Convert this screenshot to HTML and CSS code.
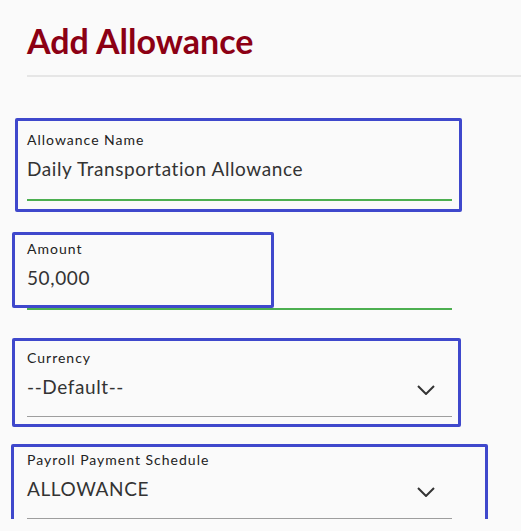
FILE: index.html
```html
<!DOCTYPE html>
<html lang="en">
<head>
<meta charset="utf-8">
<title>Add Allowance</title>
<link rel="stylesheet" href="styles.css">
</head>
<body>
<div class="page">
  <header class="page-header">
    <h1 class="page-title">Add Allowance</h1>
  </header>
  <form class="form">
    <div class="field field-name">
      <span class="highlight hl-name"></span>
      <label class="field-label">Allowance Name</label>
      <div class="field-control is-valid">
        <span class="field-value">Daily Transportation Allowance</span>
      </div>
    </div>
    <div class="field field-amount">
      <span class="highlight hl-amount"></span>
      <label class="field-label">Amount</label>
      <div class="field-control is-valid">
        <span class="field-value">50,000</span>
      </div>
    </div>
    <div class="field field-currency">
      <span class="highlight hl-currency"></span>
      <label class="field-label">Currency</label>
      <div class="field-control is-select">
        <span class="field-value">--Default--</span>
        <svg class="chevron" width="18" height="10" viewBox="0 0 18 10"><path d="M1 1 L9 9 L17 1" fill="none" stroke="#333" stroke-width="2"/></svg>
      </div>
    </div>
    <div class="field field-schedule">
      <span class="highlight hl-schedule"></span>
      <label class="field-label">Payroll Payment Schedule</label>
      <div class="field-control is-select">
        <span class="field-value">ALLOWANCE</span>
        <svg class="chevron" width="18" height="10" viewBox="0 0 18 10"><path d="M1 1 L9 9 L17 1" fill="none" stroke="#333" stroke-width="2"/></svg>
      </div>
    </div>
  </form>
</div>
</body>
</html>
```
FILE: styles.css
```css
* { box-sizing: border-box; }
html, body {
  margin: 0;
  background: #fafafa;
  font-family: Lato, "Open Sans", sans-serif;
}
.page {
  padding-top: 21px;
  padding-left: 27px;
}
.page-header {
  padding-bottom: 14px;
  border-bottom: 2px solid #e6e6e6;
}
.page-title {
  margin: 0;
  font-size: 34px;
  line-height: 40px;
  font-weight: 700;
  color: #8c0014;
}
.form {
  width: 425px;
  padding-top: 54px;
  display: flex;
  flex-direction: column;
}
.field {
  position: relative;
}
.field-amount { margin-top: 39px; }
.field-currency { margin-top: 39px; }
.field-schedule { margin-top: 34px; }
.field-label {
  display: block;
  font-size: 14px;
  line-height: 17px;
  letter-spacing: 1px;
  color: #222;
}
.field-control {
  margin-top: 9px;
  display: flex;
  align-items: center;
  justify-content: space-between;
  padding-bottom: 18px;
  border-bottom: 1px solid #9e9e9e;
}
.field-control.is-valid {
  padding-bottom: 19px;
  border-bottom: 2px solid #4caf50;
}
.field-value {
  font-size: 19px;
  line-height: 23px;
  letter-spacing: 0.6px;
  color: #333;
}
.chevron {
  margin-right: 17px;
  margin-top: 6px;
  display: block;
}
.highlight {
  position: absolute;
  border: 3px solid #3f48cc;
  border-radius: 2px;
  pointer-events: none;
}
.hl-name { left: -12px; top: -13px; width: 447px; height: 94px; }
.hl-amount { left: -15px; top: -8px; width: 262px; height: 76px; }
.hl-currency { left: -15px; top: -11px; width: 449px; height: 89px; }
.hl-schedule { left: -16px; top: -7px; width: 477px; height: 80px; }
```
